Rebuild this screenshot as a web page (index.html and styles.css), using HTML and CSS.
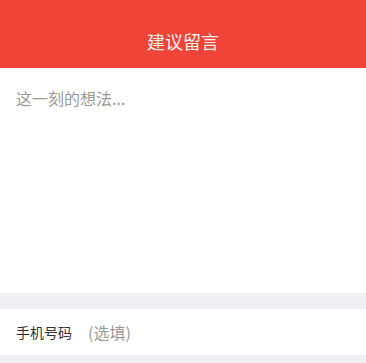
FILE: index.html
```html
<!DOCTYPE html>
<html lang="zh-CN">
<head>
<meta charset="utf-8">
<title>建议留言</title>
<link rel="stylesheet" href="styles.css">
</head>
<body>
<div class="page">
  <header class="topbar">
    <h1 class="title">建议留言</h1>
  </header>
  <div class="editor">
    <textarea class="thought" placeholder="这一刻的想法..."></textarea>
  </div>
  <div class="gap"></div>
  <div class="field">
    <span class="label">手机号码</span>
    <input class="phone" type="text" placeholder="(选填)">
  </div>
  <div class="rest"></div>
</div>
</body>
</html>
```
FILE: styles.css
```css
* { box-sizing: border-box; }
html, body {
  margin: 0;
  padding: 0;
  background: #efeff4;
  font-family: "Noto Sans CJK SC", "Noto Sans", sans-serif;
}
.page {
  display: flex;
  flex-direction: column;
  min-height: 363px;
}
.topbar {
  height: 68px;
  background: #ef4437;
  padding-top: 14px;
  display: flex;
  align-items: center;
  justify-content: center;
}
.title {
  margin: 0;
  font-size: 18px;
  font-weight: 400;
  color: #fdf3f1;
  line-height: 24px;
}
.editor {
  height: 225px;
  background: #fff;
  padding: 19px 16px 0;
}
.thought {
  display: block;
  width: 100%;
  height: 190px;
  border: 0;
  outline: none;
  resize: none;
  padding: 0;
  margin: 0;
  font-family: inherit;
  font-size: 16px;
  line-height: 22px;
  color: #333;
  background: transparent;
}
.thought::placeholder { color: #9a9a9a; }
.gap { height: 16px; }
.field {
  height: 46px;
  background: #fff;
  display: flex;
  align-items: center;
  padding: 0 16px;
  gap: 16px;
}
.label {
  font-size: 14px;
  color: #333;
}
.phone {
  flex: 1;
  border: 0;
  outline: none;
  padding: 0;
  font-family: inherit;
  font-size: 16px;
  color: #333;
  background: transparent;
}
.phone::placeholder { color: #9a9a9a; }
.rest { flex: 1; }
```
